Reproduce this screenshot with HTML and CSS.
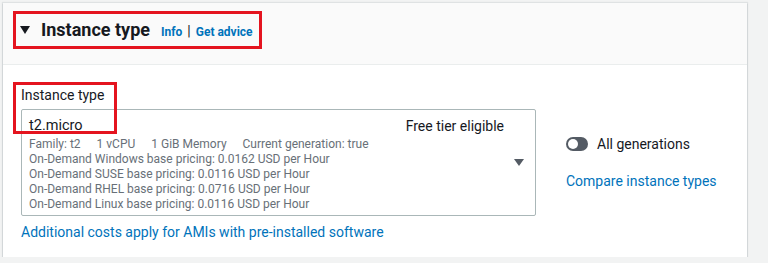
FILE: index.html
```html
<!DOCTYPE html>
<html lang="en">
<head>
    <meta charset="UTF-8">
    <meta name="viewport" content="width=device-width, initial-scale=1.0">
    <title>Instance type</title>
    <link rel="stylesheet" href="styles.css">
</head>
<body>
    <div class="panel">
        <div class="panel-header">
            <div class="mark header-mark">
                <span class="caret"></span>
                <h2>Instance type</h2>
                <a href="#" class="info">Info</a>
                <span class="sep">|</span>
                <a href="#" class="info">Get advice</a>
            </div>
        </div>
        <div class="panel-body">
            <div class="field">
                <label class="field-label">Instance type</label>
                <div class="select">
                    <div class="select-top">
                        <span class="select-value">t2.micro</span>
                        <span class="free-tier">Free tier eligible</span>
                    </div>
                    <div class="select-meta">
                        <div class="meta-row">
                            <span>Family: t2</span>
                            <span>1 vCPU</span>
                            <span>1 GiB Memory</span>
                            <span>Current generation: true</span>
                        </div>
                        <div>On-Demand Windows base pricing: 0.0162 USD per Hour</div>
                        <div>On-Demand SUSE base pricing: 0.0116 USD per Hour</div>
                        <div>On-Demand RHEL base pricing: 0.0716 USD per Hour</div>
                        <div>On-Demand Linux base pricing: 0.0116 USD per Hour</div>
                    </div>
                    <span class="arrow"></span>
                </div>
                <a href="#" class="link">Additional costs apply for AMIs with pre-installed software</a>
                <div class="mark label-mark"></div>
            </div>
            <div class="side">
                <div class="toggle-row">
                    <span class="toggle"><span class="knob"></span></span>
                    <span>All generations</span>
                </div>
                <a href="#" class="link">Compare instance types</a>
            </div>
        </div>
    </div>
</body>
</html>
```

FILE: styles.css
```css
body {
    font-family: Roboto, 'Noto Sans', sans-serif;
    background-color: #f2f3f3;
    margin: 0;
    padding: 3px 21px 0 3px;
    color: #16191f;
}
a {
    text-decoration: none;
    color: #0073bb;
}
.panel {
    background-color: #fff;
    box-shadow: 0 1px 1px rgba(0, 22, 40, 0.3), 0 0 1px 1px rgba(0, 28, 36, 0.08);
    height: 254px;
}
.panel-header {
    background-color: #fafafa;
    border-bottom: 1px solid #eaeded;
    padding: 8px 10px 15px;
}
.mark {
    border: 3px solid #e4141f;
}
.header-mark {
    display: inline-flex;
    align-items: center;
    height: 32px;
    padding: 0 6px 0 4px;
}
.caret {
    width: 0;
    height: 0;
    border-left: 5px solid transparent;
    border-right: 5px solid transparent;
    border-top: 8px solid #16191f;
    margin-right: 11px;
}
h2 {
    font-size: 18px;
    font-weight: 700;
    margin: 0 11px 0 0;
    line-height: 22px;
}
.info {
    font-size: 12px;
    font-weight: 700;
    margin-top: 3px;
}
.sep {
    font-size: 14px;
    margin: 2px 5px 0 5px;
}
.panel-body {
    display: flex;
    align-items: center;
    padding: 20px 18px 0;
}
.field {
    position: relative;
    width: 515px;
}
.field-label {
    display: block;
    font-size: 14px;
    line-height: 20px;
    margin-bottom: 4px;
}
.label-mark {
    position: absolute;
    left: -8px;
    top: -3px;
    width: 98px;
    height: 46px;
}
.select {
    position: relative;
    border: 1px solid #aab7b8;
    border-radius: 2px;
    padding: 5px 31px 3px 7px;
}
.select-top {
    display: flex;
    justify-content: space-between;
    font-size: 14px;
    line-height: 22px;
}
.select-value {
    font-size: 14.5px;
}
.select-meta {
    font-size: 12px;
    line-height: 15px;
    color: #687078;
}
.meta-row span {
    margin-right: 13px;
}
.arrow {
    position: absolute;
    right: 11px;
    top: 49px;
    border-left: 5px solid transparent;
    border-right: 5px solid transparent;
    border-top: 7px solid #545b64;
}
.link {
    display: block;
    font-size: 14px;
    line-height: 20px;
    margin-top: 6px;
}
.side {
    margin-left: 30px;
    font-size: 14px;
}
.toggle-row {
    display: flex;
    align-items: center;
    gap: 9px;
    margin-bottom: 19px;
}
.toggle {
    display: inline-block;
    width: 22px;
    height: 14px;
    border-radius: 7px;
    background-color: #545b64;
    position: relative;
}
.knob {
    position: absolute;
    left: 2px;
    top: 2px;
    width: 10px;
    height: 10px;
    border-radius: 50%;
    background-color: #fff;
}
```
